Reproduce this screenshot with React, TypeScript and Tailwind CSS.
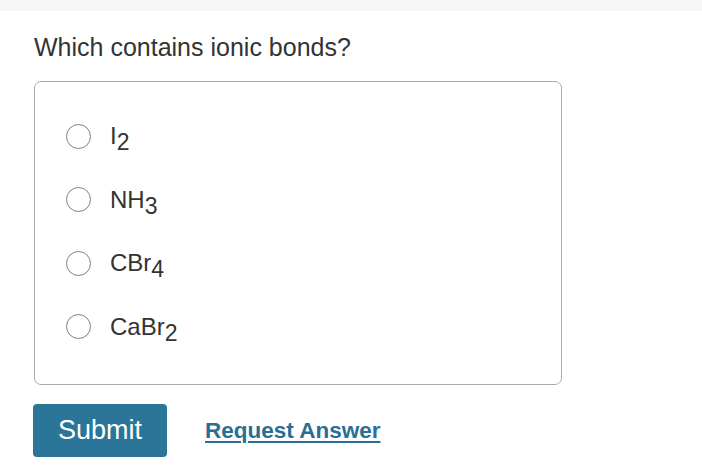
import React from "react";

const options: { base: string; sub: string }[] = [
  { base: "I", sub: "2" },
  { base: "NH", sub: "3" },
  { base: "CBr", sub: "4" },
  { base: "CaBr", sub: "2" },
];

export default function App() {
  return (
    <div className="w-[702px] h-[469px] bg-white text-[#333] overflow-hidden" style={{ fontFamily: '"Liberation Sans", Arial, sans-serif' }}>
      <div className="h-[11px] bg-[#f6f6f6]" />
      <div className="pl-[34px] pt-[21px]">
        <div className="text-[25px] leading-[30px]">Which contains ionic bonds?</div>
        <div className="mt-[19px] w-[528px] h-[304px] border border-[#aaa] rounded-[7px] pt-[42px] pl-[31px] flex flex-col gap-[39.5px]">
          {options.map((o, i) => (
            <label key={i} className="flex items-center h-[24px] gap-[19px]">
              <span className="w-[25px] h-[25px] rounded-full border border-[#808080] bg-white shrink-0" />
              <span className="text-[24px] leading-[24px] relative">
                {o.base}
                <sub className="text-[23px] relative top-[6px] align-baseline">{o.sub}</sub>
              </span>
            </label>
          ))}
        </div>
        <div className="mt-[19px] flex items-center">
          <button className="w-[134px] h-[53px] bg-[#2a7598] text-white text-[27px] rounded-[4px] -ml-px">
            Submit
          </button>
          <a className="ml-[38px] text-[22.5px] font-bold text-[#2a6e93] underline underline-offset-[3px] decoration-2">
            Request Answer
          </a>
        </div>
      </div>
    </div>
  );
}
